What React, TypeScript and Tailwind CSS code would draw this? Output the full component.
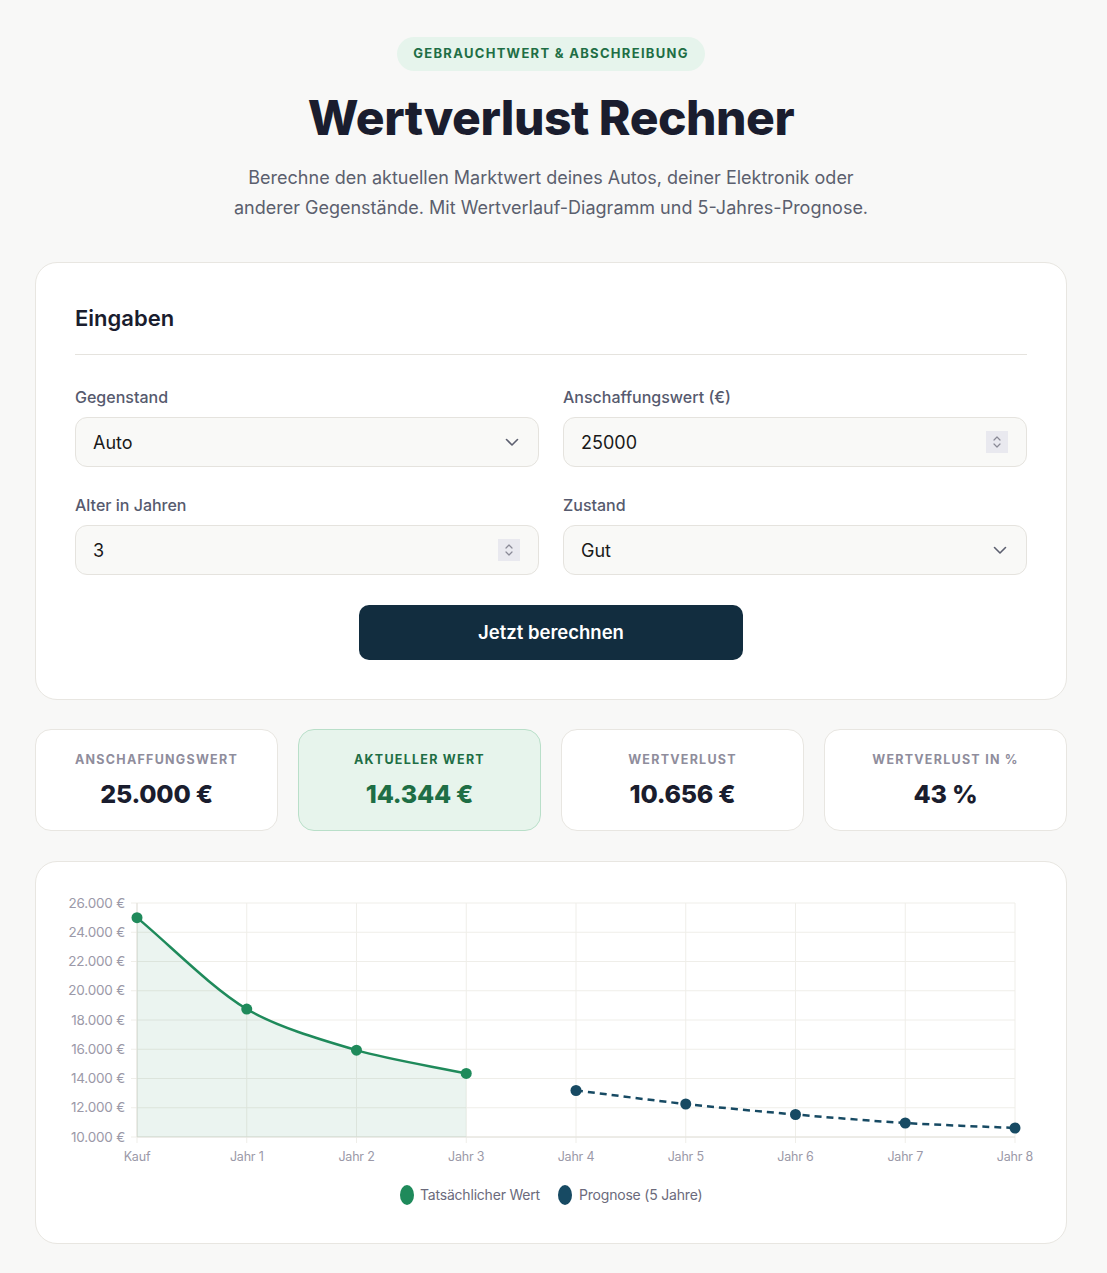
import React from "react";

type Pt = { x: number; y: number };

const PL = 69;
const PR = 947;
const PT = 8;
const PB = 242;
const step = (PR - PL) / 8;
const yOf = (v: number) => PB - ((v - 10000) / 16000) * (PB - PT);
const xOf = (i: number) => PL + i * step;

function splinePath(pts: Pt[], t: number) {
  const cps = pts.map((cur, i) => {
    const prev = pts[i - 1] || cur;
    const next = pts[i + 1] || cur;
    const d01 = Math.hypot(cur.x - prev.x, cur.y - prev.y);
    const d12 = Math.hypot(next.x - cur.x, next.y - cur.y);
    let s01 = d01 / (d01 + d12 || 1);
    let s12 = d12 / (d01 + d12 || 1);
    s01 = isNaN(s01) ? 0 : s01;
    s12 = isNaN(s12) ? 0 : s12;
    const fa = t * s01;
    const fb = t * s12;
    return {
      p: { x: cur.x - fa * (next.x - prev.x), y: cur.y - fa * (next.y - prev.y) },
      n: { x: cur.x + fb * (next.x - prev.x), y: cur.y + fb * (next.y - prev.y) },
    };
  });
  let d = `M ${pts[0].x} ${pts[0].y}`;
  for (let i = 1; i < pts.length; i++) {
    const c1 = cps[i - 1].n;
    const c2 = cps[i].p;
    d += ` C ${c1.x} ${c1.y} ${c2.x} ${c2.y} ${pts[i].x} ${pts[i].y}`;
  }
  return d;
}

const actual = [25000, 18750, 15937.5, 14344].map((v, i) => ({ x: xOf(i), y: yOf(v) }));
const forecast = [13180, 12256, 11538, 10957, 10615].map((v, i) => ({ x: xOf(i + 4), y: yOf(v) }));

const yTicks = [26000, 24000, 22000, 20000, 18000, 16000, 14000, 12000, 10000];
const xLabels = ["Kauf", "Jahr 1", "Jahr 2", "Jahr 3", "Jahr 4", "Jahr 5", "Jahr 6", "Jahr 7", "Jahr 8"];
const fmt = (v: number) => v.toLocaleString("de-DE") + " €";

function Chart() {
  const actualPath = splinePath(actual, 0.3);
  const fillPath = `${actualPath} L ${actual[3].x} ${PB} L ${actual[0].x} ${PB} Z`;
  const forecastPath = splinePath(forecast, 0.3);
  return (
    <svg width="966" height="317" viewBox="0 0 966 317" className="block">
      {yTicks.map((v) => (
        <line key={v} x1={PL - 6} x2={PR} y1={yOf(v)} y2={yOf(v)} stroke="#efeee9" strokeWidth="1" />
      ))}
      {xLabels.map((_, i) => (
        <line key={i} x1={xOf(i)} x2={xOf(i)} y1={PT} y2={PB + 6} stroke="#efeee9" strokeWidth="1" />
      ))}
      <line x1={PL} x2={PL} y1={PT} y2={PB} stroke="#e2e0da" strokeWidth="1" />
      <line x1={PL} x2={PR} y1={PB} y2={PB} stroke="#e2e0da" strokeWidth="1" />
      <path d={fillPath} fill="rgba(30,138,90,0.09)" />
      <path d={actualPath} fill="none" stroke="#1f8a5b" strokeWidth="2.5" />
      <path d={forecastPath} fill="none" stroke="#174a63" strokeWidth="2.5" strokeDasharray="7 5" />
      {actual.map((p, i) => (
        <circle key={i} cx={p.x} cy={p.y} r="5.5" fill="#1f8a5b" />
      ))}
      {forecast.map((p, i) => (
        <circle key={i} cx={p.x} cy={p.y} r="5.5" fill="#174a63" />
      ))}
      {yTicks.map((v) => (
        <text
          key={v}
          x={PL - 12}
          y={yOf(v) + 4.5}
          textAnchor="end"
          fontSize="13.5"
          fill="#9b99a8"
          fontFamily="Inter, sans-serif"
          letterSpacing="-0.2"
        >
          {fmt(v)}
        </text>
      ))}
      {xLabels.map((l, i) => (
        <text
          key={l}
          x={xOf(i)}
          y={266}
          textAnchor="middle"
          fontSize="12.5"
          fill="#9b99a8"
          fontFamily="Inter, sans-serif"
          letterSpacing="-0.2"
        >
          {l}
        </text>
      ))}
      <ellipse cx={339} cy={300} rx={7} ry={10} fill="#1f8a5b" />
      <text x={352} y={305} fontSize="14" fill="#6b6a7b" fontFamily="Inter, sans-serif" letterSpacing="-0.2">
        Tatsächlicher Wert
      </text>
      <ellipse cx={497} cy={300} rx={7} ry={10} fill="#174a63" />
      <text x={511} y={305} fontSize="14" fill="#6b6a7b" fontFamily="Inter, sans-serif" letterSpacing="-0.2">
        Prognose (5 Jahre)
      </text>
    </svg>
  );
}

function Chevron() {
  return (
    <svg width="16" height="16" viewBox="0 0 16 16" fill="none">
      <path d="M2.5 5.5 L8 11 L13.5 5.5" stroke="#5d6070" strokeWidth="1.6" strokeLinecap="round" strokeLinejoin="round" />
    </svg>
  );
}

function Stepper() {
  return (
    <div className="w-[22px] h-[22px] bg-[#e9e9ef] flex items-center justify-center">
      <svg width="10" height="16" viewBox="0 0 10 16" fill="none">
        <path d="M2 6 L5 3 L8 6" stroke="#8a8a96" strokeWidth="1.2" strokeLinecap="round" strokeLinejoin="round" />
        <path d="M2 10 L5 13 L8 10" stroke="#8a8a96" strokeWidth="1.2" strokeLinecap="round" strokeLinejoin="round" />
      </svg>
    </div>
  );
}

function Field({ label, value, icon }: { label: string; value: string; icon: "chev" | "step" }) {
  return (
    <div className="flex flex-col">
      <label className="text-[16px] font-medium text-[#565a6e] leading-5 mb-[10px]">{label}</label>
      <div className="h-[50px] rounded-xl bg-[#f9f9f7] border border-[#e5e3de] flex items-center justify-between pl-[17px] pr-[18px]">
        <span className="text-[18px] text-[#1a1a1a] leading-6 pt-[1px]">{value}</span>
        {icon === "chev" ? <Chevron /> : <Stepper />}
      </div>
    </div>
  );
}

function Stat({ label, value, active }: { label: string; value: string; active?: boolean }) {
  return (
    <div
      className={
        active
          ? "h-[102px] rounded-2xl border border-[#b9dfc9] bg-[#e7f4ec] flex flex-col items-center justify-center pt-[2px]"
          : "h-[102px] rounded-2xl border border-[#e8e6e1] bg-white flex flex-col items-center justify-center pt-[2px]"
      }
    >
      <div
        className={
          active
            ? "text-[12.5px] font-bold tracking-[0.1em] uppercase text-[#1e6e45] leading-4"
            : "text-[12.5px] font-bold tracking-[0.1em] uppercase text-[#8f8d9c] leading-4"
        }
      >
        {label}
      </div>
      <div
        className={
          active
            ? "mt-[10px] text-[25px] font-extrabold text-[#1e6e45] leading-8 tracking-[-0.01em]"
            : "mt-[10px] text-[25px] font-extrabold text-[#1a1d2e] leading-8 tracking-[-0.01em]"
        }
      >
        {value}
      </div>
    </div>
  );
}

export default function App() {
  return (
    <div className="min-h-screen bg-[#f8f8f7] font-['Inter',sans-serif] pt-[37px] pb-[29px] pl-[35px] pr-[40px]">
      <div className="flex flex-col items-center">
        <div className="h-[34px] px-4 rounded-full bg-[#e6f4ec] flex items-center text-[13px] font-bold tracking-[0.1em] text-[#1e6e45]">
          GEBRAUCHTWERT &amp; ABSCHREIBUNG
        </div>
        <h1 className="mt-[18px] text-[48px] leading-[58px] font-extrabold text-[#1a1d2e] tracking-[-0.01em]">
          Wertverlust Rechner
        </h1>
        <p className="mt-[16px] text-[18px] leading-[30px] text-[#5b5f6e] text-center max-w-[660px]">
          Berechne den aktuellen Marktwert deines Autos, deiner Elektronik oder anderer Gegenstände. Mit
          Wertverlauf-Diagramm und 5-Jahres-Prognose.
        </p>
      </div>

      <div className="mt-[39px] bg-white border border-[#e8e6e1] rounded-[22px] px-[39px] pt-[40px] pb-[39px]">
        <h2 className="text-[22px] leading-[30px] font-semibold text-[#1a1d2e] pb-[21px] border-b border-[#e5e3de]">
          Eingaben
        </h2>
        <div className="mt-[32px] grid grid-cols-2 gap-x-[24px] gap-y-[28px]">
          <Field label="Gegenstand" value="Auto" icon="chev" />
          <Field label="Anschaffungswert (€)" value="25000" icon="step" />
          <Field label="Alter in Jahren" value="3" icon="step" />
          <Field label="Zustand" value="Gut" icon="chev" />
        </div>
        <div className="mt-[30px] flex justify-center">
          <button className="w-[384px] h-[55px] rounded-[10px] bg-[#122d3f] text-white text-[18.5px] font-semibold">
            Jetzt berechnen
          </button>
        </div>
      </div>

      <div className="mt-[29px] grid grid-cols-4 gap-[20px]">
        <Stat label="Anschaffungswert" value="25.000 €" />
        <Stat label="Aktueller Wert" value="14.344 €" active />
        <Stat label="Wertverlust" value="10.656 €" />
        <Stat label="Wertverlust in %" value="43 %" />
      </div>

      <div className="mt-[30px] bg-white border border-[#e8e6e1] rounded-[22px] px-[32px] pt-[33px] pb-[31px]">
        <Chart />
      </div>
    </div>
  );
}
